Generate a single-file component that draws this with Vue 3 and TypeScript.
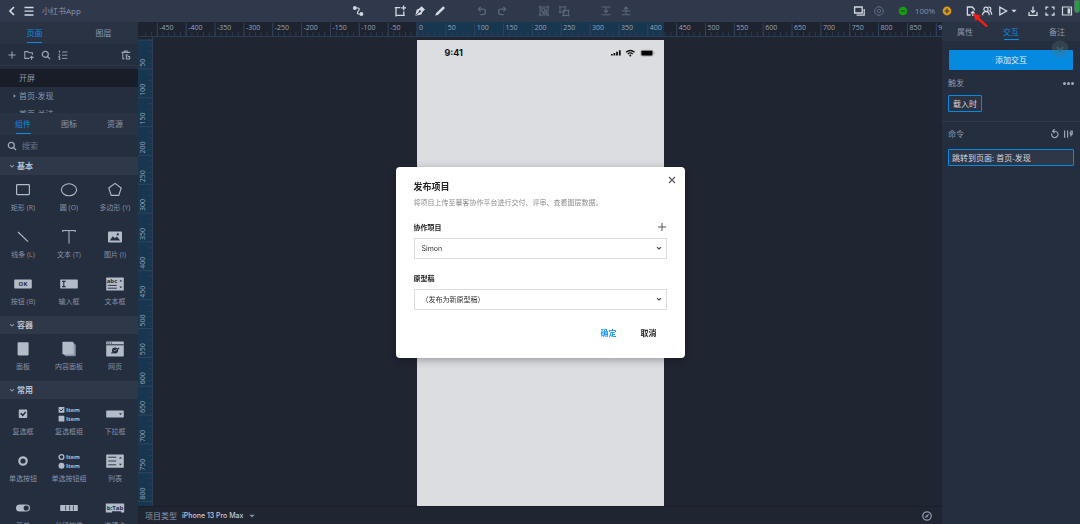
<script setup lang="ts">
import { ref } from 'vue'

interface Tool { icon: string; label: string; dim?: boolean }
interface Caption { text: string; x: number; y: number; tone: 'light' | 'dark' }
interface Widget { icon: string; label: string; captions?: Caption[] }
interface Section { title: string; items: Widget[] }

const toolGroups: Tool[][] = [
  [{ icon: 'link', label: '连线' }],
  [
    { icon: 'artboard', label: '新建画板' },
    { icon: 'pen', label: '钢笔' },
    { icon: 'pencil', label: '铅笔' },
  ],
  [
    { icon: 'undo', label: '撤销', dim: true },
    { icon: 'redo', label: '重做', dim: true },
  ],
  [
    { icon: 'group', label: '组合', dim: true },
    { icon: 'ungroup', label: '取消组合', dim: true },
  ],
  [
    { icon: 'down', label: '下移', dim: true },
    { icon: 'up', label: '上移', dim: true },
  ],
]

const itemPair: Caption[] = [
  { text: 'Item', x: 16, y: 9, tone: 'light' },
  { text: 'Item', x: 16, y: 18, tone: 'light' },
]

const sections: Section[] = [
  {
    title: '基本',
    items: [
      { icon: 'rect', label: '矩形 (R)' },
      { icon: 'circle', label: '圆 (O)' },
      { icon: 'polygon', label: '多边形 (Y)' },
      { icon: 'line', label: '线条 (L)' },
      { icon: 'text', label: '文本 (T)' },
      { icon: 'image', label: '图片 (I)' },
      { icon: 'button', label: '按钮 (B)', captions: [{ text: 'OK', x: 12, y: 13, tone: 'dark' }] },
      { icon: 'input', label: '输入框' },
      { icon: 'textarea', label: '文本框', captions: [{ text: 'abc', x: 9, y: 10, tone: 'dark' }] },
    ],
  },
  {
    title: '容器',
    items: [
      { icon: 'panel', label: '面板' },
      { icon: 'panels', label: '内容面板' },
      { icon: 'web', label: '网页' },
    ],
  },
  {
    title: '常用',
    items: [
      { icon: 'check', label: '复选框' },
      { icon: 'checks', label: '复选框组', captions: itemPair },
      { icon: 'dropdown', label: '下拉框' },
      { icon: 'radio', label: '单选按钮' },
      { icon: 'radios', label: '单选按钮组', captions: itemPair },
      { icon: 'list', label: '列表' },
      { icon: 'toggle', label: '开关' },
      { icon: 'segment', label: '分段控件' },
      { icon: 'tab', label: '选项卡', captions: [{ text: 'b:Tab', x: 12, y: 13, tone: 'dark' }] },
    ],
  },
]

const UNIT = 0.577
const range = (from: number, to: number, step: number): number[] =>
  Array.from({ length: Math.floor((to - from) / step) + 1 }, (_, i) => from + i * step)
const at = (v: number): number => Math.round(v * UNIT * 100) / 100

const hMajor = range(-450, 900, 50)
const hMinor = range(-470, 950, 10)
const vMajor = range(0, 800, 50)
const vMinor = range(0, 850, 10)

const keyword = ref('')
const project = ref('Simon')
const draft = ref('new')
const open = ref(true)
</script>

<template>
  <div class="app">
    <svg class="sprite" width="0" height="0" aria-hidden="true">
      <symbol id="t-back" viewBox="0 0 14 14"><path d="M9 3 5 7l4 4" fill="none" stroke="currentColor" stroke-width="1.7" /></symbol>
      <symbol id="t-menu" viewBox="0 0 14 14"><path d="M2.5 3.5h9M2.5 7.2h9M2.5 11h9" fill="none" stroke="currentColor" stroke-width="1.3" /></symbol>
      <symbol id="t-link" viewBox="0 0 14 14">
        <circle cx="3.8" cy="4" r="1.9" fill="currentColor" /><circle cx="10.4" cy="10" r="1.9" fill="currentColor" />
        <path d="M3.8 4H7q1.6.2 1 2L6.6 8q-.6 2 1 2h3" fill="none" stroke="currentColor" stroke-width="1.2" />
      </symbol>
      <symbol id="t-artboard" viewBox="0 0 14 14">
        <path d="M7.3 3.6H3v7.8h7.8V7.4M1.8 3.6H3M3 11.4v1M10.8 11.4h1" fill="none" stroke="currentColor" stroke-width="1.3" />
        <path d="M10.6 1.4v4.8M8.2 3.8H13" fill="none" stroke="currentColor" stroke-width="1.3" />
      </symbol>
      <symbol id="t-pen" viewBox="0 0 14 14">
        <path d="M8.6 2.2 12 5.4 9.6 7.8 8.4 10.6 2.6 11.8 2.4 11.4 3.6 5.8 6.2 4.6z" fill="currentColor" />
        <path d="M2.8 11.4 6.4 7.8" stroke="#2f394b" stroke-width=".9" /><circle cx="6.8" cy="7.3" r="1.1" fill="#2f394b" />
      </symbol>
      <symbol id="t-pencil" viewBox="0 0 14 14"><path d="m10.2 2.2 1.8 1.8-6.8 6.8-3 1 1-2.8z" fill="currentColor" /></symbol>
      <symbol id="t-undo" viewBox="0 0 14 14"><path d="M5.6 3 3.4 5.2l2.2 2.2M3.6 5.2h4.2a2.7 2.7 0 0 1 0 5.4H5.2" fill="none" stroke="currentColor" stroke-width="1.2" /></symbol>
      <symbol id="t-redo" viewBox="0 0 14 14"><path d="m8.4 3 2.2 2.2-2.2 2.2M10.4 5.2H6.2a2.7 2.7 0 0 0 0 5.4h2.6" fill="none" stroke="currentColor" stroke-width="1.2" /></symbol>
      <symbol id="t-group" viewBox="0 0 14 14">
        <path d="M3 3h8v8H3zM1.8 3H3V1.8M11 1.8V3h1.2M1.8 11H3v1.2M11 12.2V11h1.2M4.8 4.8h3v3h-3zM7.8 6.4h1.6v3H6.2V7.8" fill="none" stroke="currentColor" stroke-width="1.1" />
      </symbol>
      <symbol id="t-ungroup" viewBox="0 0 14 14">
        <path d="M3 3h5v5H3zM1.8 3H3V1.8M8 1.8V3h1.2M1.8 8H3v1.2M6.4 6.4h5v5h-5zM5.2 11.4h1.2v1.2M11.4 12.6v-1.2h1.2M11.4 6.4h1.2" fill="none" stroke="currentColor" stroke-width="1.1" />
      </symbol>
      <symbol id="t-down" viewBox="0 0 14 14"><path d="M2.6 3h8.8M2.6 10.8h8.8M7 3.4v5.2M5 6.4l2 2.2 2-2.2" fill="none" stroke="currentColor" stroke-width="1.1" /></symbol>
      <symbol id="t-up" viewBox="0 0 14 14"><path d="M2.6 10.8h8.8M2.6 7h8.8M7 10.6V3M5 5l2-2 2 2" fill="none" stroke="currentColor" stroke-width="1.1" /></symbol>
      <symbol id="t-layers" viewBox="0 0 14 14">
        <path d="M2.6 3h7.6v6H2.6z" fill="none" stroke="currentColor" stroke-width="1.3" />
        <path d="M4.6 11.2h7.6V5" fill="none" stroke="currentColor" stroke-width="1.2" />
      </symbol>
      <symbol id="t-target" viewBox="0 0 14 14">
        <circle cx="7" cy="7" r="4.3" fill="none" stroke="currentColor" /><circle cx="7" cy="7" r="1.7" fill="none" stroke="currentColor" />
        <path d="M7 1.9v1.6M7 10.5v1.6M1.9 7h1.6M10.5 7h1.6" stroke="currentColor" />
      </symbol>
      <symbol id="t-minus" viewBox="0 0 14 14"><circle cx="7" cy="7" r="4.3" fill="#16a00c" /><path d="M4.8 7h4.4" stroke="#2f394b" stroke-width="1.1" /></symbol>
      <symbol id="t-plus" viewBox="0 0 14 14"><circle cx="7" cy="7" r="4.4" fill="#dc9a1c" /><path d="M4.6 7h4.8M7 4.6v4.8" stroke="#2f394b" stroke-width="1.1" /></symbol>
      <symbol id="t-publish" viewBox="0 0 14 14">
        <path d="M6.6 11H3.4V3h4.8l2 2v1.6" fill="none" stroke="currentColor" stroke-width="1.3" />
        <path d="M8.8 12V8M6.9 9.4l1.9-1.9 1.9 1.9" fill="none" stroke="currentColor" stroke-width="1.2" />
      </symbol>
      <symbol id="t-users" viewBox="0 0 14 14">
        <circle cx="6" cy="5.2" r="2.1" fill="none" stroke="currentColor" stroke-width="1.2" />
        <path d="M2.6 11.2q0-3.6 3.4-3.6t3.2 3.6M8.4 3.2q2.4-.3 2.4 2 0 1.2-1 1.8 2 .8 2 3.8" fill="none" stroke="currentColor" stroke-width="1.2" />
      </symbol>
      <symbol id="t-play" viewBox="0 0 14 14"><path d="M3.8 3.2v7.6L10.6 7z" fill="none" stroke="currentColor" stroke-width="1.3" /></symbol>
      <symbol id="t-caret" viewBox="0 0 8 8"><path d="M1.4 2.8h5.2L4 5.6z" fill="currentColor" /></symbol>
      <symbol id="t-download" viewBox="0 0 14 14"><path d="M7 2.4v6M4.8 6.4 7 8.6l2.2-2.2M3 8v3.4h8V8" fill="none" stroke="currentColor" stroke-width="1.3" /></symbol>
      <symbol id="t-full" viewBox="0 0 14 14"><path d="M5.4 3.2H3v2.4M8.6 3.2H11v2.4M3 8.6V11h2.4M11 8.6V11H8.6" fill="none" stroke="currentColor" stroke-width="1.3" /></symbol>
      <symbol id="t-dock" viewBox="0 0 14 14"><path d="M2.5 3h9v8h-9z" fill="none" stroke="currentColor" stroke-width="1.2" /><path d="M7.6 4.4h2.6v5.2H7.6z" fill="currentColor" /></symbol>

      <symbol id="p-add" viewBox="0 0 12 12"><path d="M6 2.4v7.2M2.4 6h7.2" stroke="currentColor" stroke-width="1.1" /></symbol>
      <symbol id="p-folder" viewBox="0 0 12 12"><path d="M6.4 9.4H1.8V2.6h3l1.2 1.2h3.4v2M8.6 6.8v4M6.8 8.4h3.8" fill="none" stroke="currentColor" stroke-width="1.1" /></symbol>
      <symbol id="p-search" viewBox="0 0 12 12"><circle cx="5.3" cy="5.3" r="3" fill="none" stroke="currentColor" stroke-width="1.2" /><path d="m7.5 7.5 2.6 2.6" stroke="currentColor" stroke-width="1.3" /></symbol>
      <symbol id="p-order" viewBox="0 0 12 12"><path d="M5 3h5.4M5 6.2h5.4M5 9.4h5.4M1.8 2l.8-.3v2.4M1.6 5.4h1.2v1L1.6 7.6h1.4M1.6 8.6H3v1.8H1.6M2.2 9.5H3" fill="none" stroke="currentColor" stroke-width=".9" /></symbol>
      <symbol id="p-trash" viewBox="0 0 12 12"><path d="M1.4 3.4h8.8M4.4 3.4V2h2.8v1.4M2.8 3.6v6h1.6M5.4 6h3M6.4 6v4h3.2V7.6H7.6" fill="none" stroke="currentColor" stroke-width="1.1" /></symbol>
      <symbol id="p-chevron" viewBox="0 0 8 8"><path d="m2 3.2 2 1.8 2-1.8" fill="none" stroke="currentColor" stroke-width="1.1" /></symbol>
      <symbol id="p-reset" viewBox="0 0 12 12"><path d="M2.8 5.4a3.2 3.2 0 1 0 3.4-2.2H4M5.6 1.2l-2 2 2 2" fill="none" stroke="currentColor" stroke-width="1.1" /></symbol>
      <symbol id="p-sort" viewBox="0 0 12 12"><path d="M2.6 2.4v7.4M5.6 2.4v7.4M8.8 2.4v6M10.2 2.4v4.4M7.6 5.4h1.2M10.2 6.6h-2" fill="none" stroke="currentColor" stroke-width="1.1" /></symbol>

      <symbol id="w-rect" viewBox="0 0 24 22"><rect x="5.6" y="5.6" width="12.8" height="10" rx=".8" fill="none" stroke="currentColor" stroke-width="1.2" /></symbol>
      <symbol id="w-circle" viewBox="0 0 24 22"><ellipse cx="12" cy="10.8" rx="7.6" ry="6" fill="none" stroke="currentColor" stroke-width="1.1" /></symbol>
      <symbol id="w-polygon" viewBox="0 0 24 22"><path d="m12 4.4 6.2 4.6-2.4 7.4H8.2L5.8 9z" fill="none" stroke="currentColor" stroke-width="1.1" /></symbol>
      <symbol id="w-line" viewBox="0 0 24 22"><path d="m7 6 10 9.6" stroke="currentColor" stroke-width="1.1" /></symbol>
      <symbol id="w-text" viewBox="0 0 24 22"><path d="M5.6 4.6h12.8M12 4.6v13M5.8 4.2v1.8M18.2 4.2v1.8" fill="none" stroke="currentColor" /></symbol>
      <symbol id="w-image" viewBox="0 0 24 22">
        <rect x="5" y="5.4" width="14" height="11" rx=".8" fill="currentColor" />
        <path d="m6.8 14.6 3-4.4 2 2 2-1.6 3.4 4z" fill="#252e3e" /><circle cx="14.8" cy="8.4" r="1.1" fill="#252e3e" />
      </symbol>
      <symbol id="w-button" viewBox="0 0 24 22"><rect x="3.2" y="6.6" width="17.6" height="8.8" rx="1" fill="currentColor" /></symbol>
      <symbol id="w-input" viewBox="0 0 24 22"><rect x="3.2" y="6.6" width="17.6" height="8.8" rx=".6" fill="currentColor" /><path d="M5 8.4h3.6M5 13.6h3.6M6.8 8.4v5.2" stroke="#252e3e" stroke-width="1.1" /></symbol>
      <symbol id="w-textarea" viewBox="0 0 24 22">
        <rect x="3.2" y="4.6" width="17.6" height="13" rx=".6" fill="currentColor" />
        <path d="M4.8 12.4h9M4.8 15.2h9" stroke="#252e3e" stroke-width=".9" /><path d="M16.4 8.4h2.8l-1.4-1.6zM16.4 13.6h2.8l-1.4 1.6z" fill="#252e3e" />
      </symbol>
      <symbol id="w-panel" viewBox="0 0 24 22"><rect x="6.6" y="4.2" width="11" height="13.2" rx=".8" fill="currentColor" /></symbol>
      <symbol id="w-panels" viewBox="0 0 24 22"><rect x="8" y="6.2" width="10.8" height="12" rx=".8" fill="#7f8aa3" /><rect x="6.8" y="5.2" width="10.8" height="12" rx=".8" fill="#98a2b6" /><rect x="5.4" y="3.8" width="11" height="12.4" rx=".8" fill="currentColor" /></symbol>
      <symbol id="w-web" viewBox="0 0 24 22">
        <rect x="3.2" y="3.6" width="17.6" height="15" rx=".8" fill="currentColor" /><path d="M3.2 6.8h17.6" stroke="#252e3e" /><path d="M4.4 5h1M6.2 5h1M8 5h1" stroke="#252e3e" />
        <circle cx="12" cy="12.6" r="3" fill="#252e3e" /><path d="M8.2 15q4.6-.4 7.8-5.2" fill="none" stroke="#252e3e" stroke-width="1.2" /><path d="M10.8 12.8q2-.2 3-1.6" stroke="currentColor" stroke-width=".8" fill="none" />
      </symbol>
      <symbol id="w-check" viewBox="0 0 24 22"><rect x="7.8" y="6.6" width="8.4" height="8.4" rx=".8" fill="currentColor" /><path d="m9.6 10.2 2.2 2.2 2.8-3.4" fill="none" stroke="#252e3e" stroke-width="1.5" /></symbol>
      <symbol id="w-checks" viewBox="0 0 24 22">
        <rect x="1.6" y="4" width="5.8" height="5.8" rx=".6" fill="currentColor" /><path d="m2.8 6.6 1.4 1.4 2-2.4" fill="none" stroke="#252e3e" />
        <rect x="1.6" y="12.8" width="5.8" height="5.8" rx=".6" fill="currentColor" />
      </symbol>
      <symbol id="w-dropdown" viewBox="0 0 24 22"><rect x="3.2" y="7.4" width="17.6" height="7.2" rx=".6" fill="currentColor" /><path d="M16 10.2h3l-1.5 1.8z" fill="#252e3e" /></symbol>
      <symbol id="w-radio" viewBox="0 0 24 22"><circle cx="12" cy="11" r="3.7" fill="none" stroke="currentColor" stroke-width="2.2" /></symbol>
      <symbol id="w-radios" viewBox="0 0 24 22">
        <circle cx="4.5" cy="7" r="2.4" fill="none" stroke="currentColor" stroke-width="1.3" /><circle cx="4.5" cy="15.8" r="3" fill="currentColor" />
      </symbol>
      <symbol id="w-list" viewBox="0 0 24 22">
        <rect x="3.2" y="4.6" width="17.6" height="13.2" rx=".6" fill="currentColor" /><path d="M5.2 7.2h8M5.2 11h8M5.2 14.8h8" stroke="#252e3e" stroke-width=".9" />
        <path d="M16 8.6h2.8l-1.4-1.8zM16 13.8h2.8l-1.4 1.8z" fill="#252e3e" />
      </symbol>
      <symbol id="w-toggle" viewBox="0 0 24 22"><rect x="5" y="7.4" width="14" height="7.2" rx="3.6" fill="currentColor" /><circle cx="15.2" cy="11" r="2.6" fill="#252e3e" /></symbol>
      <symbol id="w-segment" viewBox="0 0 24 22"><rect x="3.2" y="8" width="17.6" height="6" rx=".6" fill="currentColor" /><path d="M8.6 8.6v4.8M12.6 8.6v4.8M16.4 8.6v4.8" stroke="#252e3e" stroke-width=".8" /></symbol>
      <symbol id="w-tab" viewBox="0 0 24 22"><path d="M2.8 6.4h18.4v9H18v-1.2H9v1.2H2.8z" fill="currentColor" /></symbol>
    </svg>

    <header class="toolbar">
      <div class="tool-left">
        <button class="tool" aria-label="返回"><svg><use href="#t-back" /></svg></button>
        <button class="tool" aria-label="菜单"><svg><use href="#t-menu" /></svg></button>
        <span class="doc-name">小红书App</span>
      </div>
      <div class="tool-mid">
        <div v-for="(g, i) in toolGroups" :key="i" class="tool-group">
          <button v-for="t in g" :key="t.icon" class="tool" :class="{ dim: t.dim }" :aria-label="t.label"><svg><use :href="'#t-' + t.icon" /></svg></button>
        </div>
      </div>
      <div class="tool-right">
        <div class="tool-group">
          <button class="tool" aria-label="图层视图"><svg><use href="#t-layers" /></svg></button>
          <button class="tool dim" aria-label="定位"><svg><use href="#t-target" /></svg></button>
        </div>
        <div class="tool-group zoom">
          <button class="tool" aria-label="缩小"><svg><use href="#t-minus" /></svg></button>
          <span class="percent">100%</span>
          <button class="tool" aria-label="放大"><svg><use href="#t-plus" /></svg></button>
        </div>
        <div class="tool-group share">
          <button class="tool publish" aria-label="发布">
            <svg><use href="#t-publish" /></svg>
            <svg class="pointer" viewBox="0 0 18 18" aria-hidden="true"><path d="M1.4 1.6 9 3.8 7 5.6l9 8.4-1.6 1.2L5.2 7.4 3.6 9.2z" fill="#fb1d12" /></svg>
          </button>
          <button class="tool" aria-label="协作"><svg><use href="#t-users" /></svg></button>
          <button class="tool" aria-label="演示"><svg><use href="#t-play" /></svg></button>
          <button class="caret" aria-label="演示选项"><svg><use href="#t-caret" /></svg></button>
        </div>
        <div class="tool-group view">
          <button class="tool" aria-label="下载"><svg><use href="#t-download" /></svg></button>
          <button class="tool" aria-label="全屏"><svg><use href="#t-full" /></svg></button>
          <button class="tool" aria-label="侧栏"><svg><use href="#t-dock" /></svg></button>
        </div>
        <i class="meter"></i>
      </div>
    </header>

    <div class="body">
      <aside class="left">
        <nav class="tabs">
          <button class="active">页面</button>
          <button>图层</button>
        </nav>
        <div class="page-tools">
          <button aria-label="新建页面"><svg><use href="#p-add" /></svg></button>
          <button aria-label="新建文件夹"><svg><use href="#p-folder" /></svg></button>
          <button aria-label="搜索页面"><svg><use href="#p-search" /></svg></button>
          <button aria-label="排序"><svg><use href="#p-order" /></svg></button>
          <button class="last" aria-label="回收站"><svg><use href="#p-trash" /></svg></button>
        </div>
        <div class="pages">
          <button class="page active">开屏</button>
          <button class="page"><svg class="arrow" viewBox="0 0 7 8" aria-hidden="true"><path d="m1.6 2 2.2 2-2.2 2z" fill="currentColor" /></svg>首页-发现</button>
          <button class="page">首页-关注</button>
        </div>
        <nav class="tabs">
          <button class="active">组件</button>
          <button>图标</button>
          <button>资源</button>
        </nav>
        <label class="search">
          <svg><use href="#p-search" /></svg>
          <input v-model="keyword" type="text" placeholder="搜索" aria-label="搜索" />
        </label>
        <div class="library">
          <section v-for="s in sections" :key="s.title">
            <h3><svg><use href="#p-chevron" /></svg>{{ s.title }}</h3>
            <div class="grid">
              <button v-for="w in s.items" :key="w.icon" class="widget">
                <svg viewBox="0 0 24 22">
                  <use :href="'#w-' + w.icon" width="24" height="22" />
                  <text v-for="c in w.captions" :key="c.y" :x="c.x" :y="c.y" text-anchor="middle" :class="c.tone">{{ c.text }}</text>
                </svg>
                <span>{{ w.label }}</span>
              </button>
            </div>
          </section>
        </div>
      </aside>

      <main class="center">
        <div class="ruler-h">
          <svg width="247" height="14">
            <rect width="247" height="14" class="zone" />
            <line v-for="v in hMinor" :key="'n' + v" :x1="at(v)" :x2="at(v)" y1="10" y2="14" class="tick minor" />
            <line v-for="v in hMajor" :key="'m' + v" :x1="at(v)" :x2="at(v)" y1="1" y2="14" class="tick" />
            <text v-for="v in hMajor" :key="'t' + v" :x="at(v) + 2" y="8">{{ v }}</text>
          </svg>
        </div>
        <div class="stage">
          <div class="device">
            <b class="clock">9:41</b>
            <svg class="status" width="44" height="10" viewBox="0 0 44 10" aria-hidden="true">
              <path d="M.8 7.6V6M3.4 7.6V5M6 7.6V3.8M8.8 7.6V2.2" stroke="#111" stroke-width="1.8" />
              <path d="M15 4.2q4.3-3.4 8.6 0M16.8 5.9q2.5-1.9 5 0" fill="none" stroke="#111" stroke-width="1.3" /><circle cx="19.3" cy="7.4" r="1" fill="#111" />
              <rect x="29.4" y="1.8" width="13" height="6.6" rx="1.6" fill="#aaa" /><rect x="30.4" y="2.8" width="11" height="4.6" rx=".8" fill="#000" /><path d="M43 4v2.2" stroke="#aaa" />
            </svg>
          </div>
        </div>
        <div class="ruler-v">
          <svg width="14" height="466">
            <line v-for="v in vMinor" :key="'n' + v" :y1="at(v)" :y2="at(v)" x1="10" x2="14" class="tick minor" />
            <line v-for="v in vMajor" :key="'m' + v" :y1="at(v)" :y2="at(v)" x1="0" x2="14" class="tick" />
            <text v-for="v in vMajor.slice(1)" :key="'t' + v" :transform="`translate(7 ${at(v) - 2}) rotate(-90)`">{{ v }}</text>
          </svg>
        </div>
        <footer class="status-bar">
          <span>项目类型</span>
          <button>iPhone 13 Pro Max<svg><use href="#t-caret" /></svg></button>
          <svg class="compass" viewBox="0 0 12 12" aria-hidden="true"><circle cx="6" cy="6" r="4.2" fill="none" stroke="currentColor" stroke-width="1.3" /><path d="m3.8 8.2 1.2-2.8L8.2 3.8 6.8 6.8z" fill="currentColor" /></svg>
        </footer>
      </main>

      <aside class="right">
        <nav class="tabs">
          <button>属性</button>
          <button class="active">交互</button>
          <button>备注</button>
        </nav>
        <svg class="ghost" viewBox="0 0 18 18" aria-hidden="true"><circle cx="9" cy="9" r="8.5" fill="#5a6e78" fill-opacity=".3" /><path d="m6 7 3 4 3-4" fill="none" stroke="#3d6670" stroke-width="1.6" /></svg>
        <div class="block trigger">
          <button class="primary">添加交互</button>
          <div class="row"><span>触发</span><button class="dots" aria-label="更多"><i></i><i></i><i></i></button></div>
          <button class="chip">载入时</button>
        </div>
        <div class="block">
          <div class="row">
            <span>命令</span>
            <span class="ops">
              <button aria-label="重置"><svg><use href="#p-reset" /></svg></button>
              <button aria-label="排列"><svg><use href="#p-sort" /></svg></button>
            </span>
          </div>
          <button class="command">跳转到页面: 首页-发现</button>
        </div>
      </aside>
    </div>

    <div v-if="open" class="overlay">
      <form class="dialog" role="dialog" aria-labelledby="dlg-title" @submit.prevent>
        <button type="button" class="close" aria-label="关闭" @click="open = false">
          <svg viewBox="0 0 10 10"><path d="m2 2 6 6M8 2 2 8" stroke="#555" stroke-width="1.1" /></svg>
        </button>
        <h2 id="dlg-title">发布项目</h2>
        <p>将项目上传至摹客协作平台进行交付、评审、查看图层数据。</p>
        <div class="field-head">
          <label for="project">协作项目</label>
          <button type="button" aria-label="新建项目"><svg viewBox="0 0 10 10"><path d="M5 1v8M1 5h8" stroke="#555" /></svg></button>
        </div>
        <div class="select">
          <select id="project" v-model="project"><option value="Simon">Simon</option></select>
          <svg><use href="#p-chevron" /></svg>
        </div>
        <div class="field-head"><label for="draft">原型稿</label></div>
        <div class="select">
          <select id="draft" v-model="draft"><option value="new">（发布为新原型稿）</option></select>
          <svg><use href="#p-chevron" /></svg>
        </div>
        <div class="actions">
          <button type="submit" class="ok">确定</button>
          <button type="button" @click="open = false">取消</button>
        </div>
      </form>
    </div>
  </div>
</template>

<style>
body { background: #1f2531; }
</style>

<style scoped>
.app {
  display: flex;
  flex-direction: column;
  height: 100vh;
  overflow: hidden;
  background: #1f2531;
  color: #8c97ad;
  font: 8px/12px "Open Sans", "Noto Sans CJK SC", sans-serif;
}
.app *, .app *::before { box-sizing: border-box; }
button, input, select { font: inherit; color: inherit; background: none; border: 0; padding: 0; margin: 0; }
button { display: flex; align-items: center; justify-content: center; cursor: pointer; }
svg { display: block; flex: none; }
.sprite { position: absolute; }

.toolbar { display: flex; flex: none; height: 22px; background: #2f394b; color: #d3d8e2; }
.tool-left { display: flex; align-items: center; gap: 3px; flex: 0 0 32.5%; padding-left: 5px; }
.doc-name { margin-left: 3px; color: #8b95aa; }
.tool-mid { display: flex; gap: 28px; }
.tool-group { display: flex; align-items: center; gap: 6px; }
.tool-group.zoom { gap: 4px; }
.tool-group.share { gap: 2px; }
.tool-group.view { gap: 3px; margin-left: -2px; }
.tool, .tool svg { width: 14px; height: 14px; }
.tool.dim { color: #5b667b; }
.caret { margin-left: -2px; }
.caret, .caret svg { width: 8px; height: 8px; }
.tool-right { display: flex; gap: 10px; margin-left: auto; }
.percent { width: 22px; text-align: center; color: #8590a8; }
.publish { position: relative; }
.publish .pointer { position: absolute; left: 8px; top: 8px; width: 18px; height: 18px; z-index: 2; }
.meter { width: 6px; height: 13px; margin-left: -10px; border: 1px solid #5b6472; background: #23a03d; border-radius: 0 0 3px 3px; }

.body { display: flex; flex: 1; min-height: 0; }
.left, .right { flex: none; width: 138px; background: #252e3e; }
.left { display: flex; flex-direction: column; }

.tabs { display: flex; flex: none; height: 22px; background: #2a3344; }
.tabs button { flex: 1; position: relative; }
.tabs .active { color: #0c8ce0; }
.tabs .active::after { content: ""; position: absolute; bottom: 1px; width: 15px; height: 1px; background: #0c8ce0; }

.page-tools { display: flex; flex: none; align-items: center; gap: 5px; height: 22px; padding: 0 6px; color: #99a3b6; border-bottom: 1px solid #2d3646; }
.page-tools svg { width: 12px; height: 12px; }
.page-tools .last { margin-left: auto; }
.pages { flex: none; height: 47px; padding-top: 3px; overflow: hidden; }
.page { display: flex; justify-content: flex-start; width: 100%; height: 18px; padding-left: 19px; }
.page.active { background: #191d28; }
.arrow { width: 7px; height: 8px; margin-left: -7px; }

.search { display: flex; flex: none; align-items: center; gap: 4px; height: 22px; padding-left: 6px; color: #a2abbc; }
.search svg { width: 12px; height: 12px; }
.search input { flex: 1; min-width: 0; outline: 0; }
.search input::placeholder { color: #697489; opacity: 1; }

.library { flex: 1; min-height: 0; overflow: hidden; }
.library h3 { display: flex; align-items: center; height: 18px; margin: 0; padding-left: 8px; background: #2e3849; color: #b9c0ce; font-size: 8px; font-weight: 700; }
.library h3 svg { width: 8px; height: 8px; margin-right: 1px; color: #8590a8; }
.grid { display: grid; grid-template-columns: repeat(3, 1fr); }
.widget { flex-direction: column; justify-content: flex-start; height: 47px; padding-top: 4px; color: #b3bac8; }
.widget svg { width: 24px; height: 22px; overflow: visible; }
.widget text { font: 700 6px "Open Sans", "Noto Sans", sans-serif; fill: #b3bac8; }
.widget text.dark { fill: #252e3e; }
.widget span { margin-top: 1px; color: #8691a8; font-size: 7px; line-height: 11px; white-space: nowrap; }

.center { display: grid; flex: 1; min-width: 0; grid-template: 15px minmax(0, 1fr) 18px / 15px minmax(0, 1fr); }
.ruler-h { grid-area: 1 / 1 / 2 / 3; display: flex; justify-content: center; overflow: hidden; background: #1e2330; border-bottom: 1px solid #2c3c54; }
.ruler-h svg, .ruler-v svg { overflow: visible; }
.ruler-h text, .ruler-v text { font: 7px "Open Sans", "Noto Sans", sans-serif; fill: #98a3b7; }
.zone { fill: #17364f; }
.tick { stroke: #33435d; stroke-width: 1; }
.tick.minor { stroke: #2c3b53; }
.ruler-v { grid-area: 2 / 1; padding-top: 3px; overflow: hidden; background: linear-gradient(#1e2330 3px, #17364f 3px); border-right: 1px solid #2c3c54; }
.stage { grid-area: 2 / 1 / 3 / 3; display: flex; justify-content: center; padding-top: 3px; }
.device { display: flex; justify-content: space-between; align-items: flex-start; width: 247px; padding: 7px 9px 0 28px; background: #dcdde0; color: #111; }
.clock { font: 700 9px/12px Inter, sans-serif; }
.status { margin-top: 1px; }
.status-bar { grid-area: 3 / 1 / 4 / 3; display: flex; align-items: center; padding: 0 9px 0 7px; border-top: 1px solid #1a1f2a; }
.status-bar button { margin-left: 5px; color: #c3cad7; font: 500 7px/12px Inter, sans-serif; }
.status-bar button svg { width: 8px; height: 8px; margin-left: 5px; color: #8590a8; }
.compass { width: 12px; height: 12px; margin-left: auto; }

.right { position: relative; }
.right .tabs { height: 19px; }
.ghost { position: absolute; top: 18px; right: 11px; width: 18px; height: 18px; z-index: 1; }
.block { padding: 6px 6px 0; }
.trigger { padding-top: 9px; padding-bottom: 9px; border-bottom: 1px solid #303a4b; }
.primary { width: calc(100% - 2px); height: 20px; margin-left: 1px; border-radius: 1px; background: #058ae0; color: #e3f2fd; }
.row { display: flex; align-items: center; justify-content: space-between; height: 12px; margin: 7px 0 6px; }
.block:not(.trigger) .row { margin: 0 0 9px; }
.dots { gap: 1px; }
.dots i { width: 3px; height: 3px; border-radius: 50%; background: #a2abbc; }
.chip { height: 17px; padding: 0 4px; border: 1px solid #0989e0; border-radius: 1px; color: #d5dae4; background: #2a3344; }
.command { justify-content: flex-start; width: 100%; height: 17px; padding: 0 3px; border: 1px solid #0989e0; border-radius: 1px; color: #d5dae4; background: #2d3748; }
.ops { display: flex; gap: 1px; color: #a2abbc; }
.ops svg { width: 12px; height: 12px; }

.overlay { position: fixed; inset: 0; display: flex; align-items: center; justify-content: center; pointer-events: none; }
.dialog { position: relative; width: 289px; padding: 13px 18px 16px; border-radius: 4px; background: #fff; color: #222; pointer-events: auto; box-shadow: 0 2px 8px rgba(0, 0, 0, 0.3); font: 7px/11px Inter, "Noto Sans CJK SC", sans-serif; }
.dialog h2 { margin: 0; font-size: 9px; line-height: 13px; font-weight: 700; }
.dialog p { margin: 4px 0 14px; color: #8c8c8c; }
.field-head { display: flex; align-items: center; justify-content: space-between; height: 11px; margin-bottom: 5px; font-weight: 700; }
.field-head svg { width: 10px; height: 10px; }
.select { display: grid; align-items: center; margin-bottom: 14px; }
.select select { grid-area: 1 / 1; width: 100%; height: 21px; padding: 0 7px; border: 1px solid #dcdcdc; border-radius: 0; appearance: none; color: #333; }
.select svg { grid-area: 1 / 1; justify-self: end; width: 8px; height: 8px; margin-right: 4px; color: #444; pointer-events: none; }
.actions { display: flex; justify-content: flex-end; gap: 4px; margin-top: 16px; }
.actions button { height: 16px; padding: 0 10px; font-size: 8px; font-weight: 700; }
.actions .ok { color: #1a9bf5; }
.close { position: absolute; top: 8px; right: 8px; width: 10px; height: 10px; }
.close svg { width: 10px; height: 10px; }
</style>
